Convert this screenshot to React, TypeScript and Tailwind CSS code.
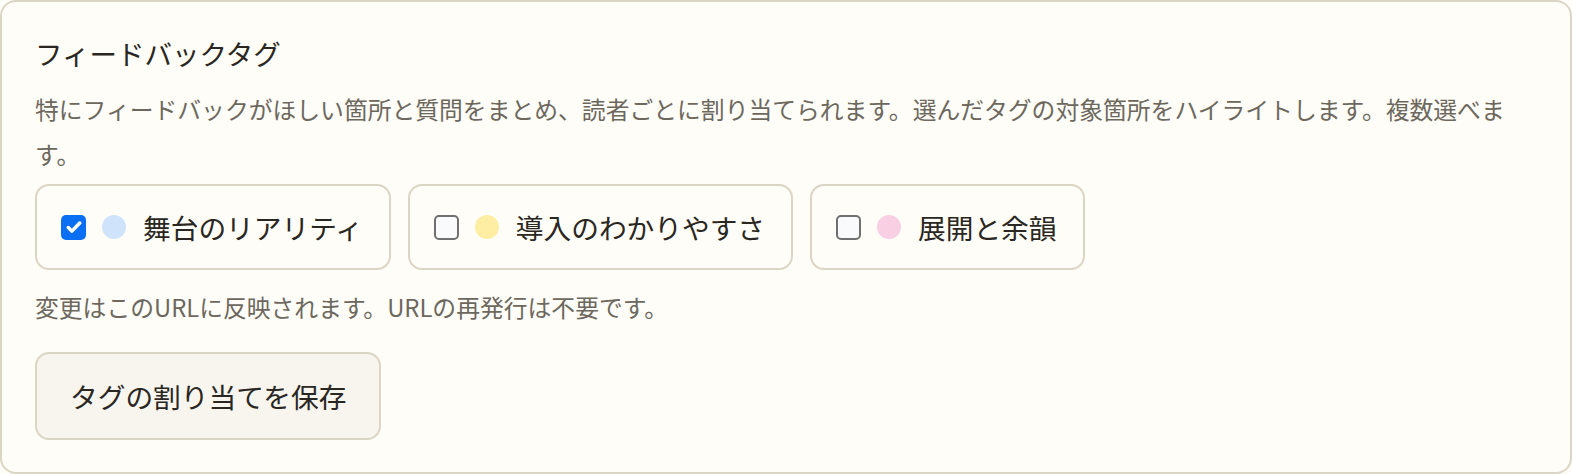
import React, { useState } from 'react';

type Tag = {
  id: string;
  label: string;
  dot: string;
};

const TAGS: Tag[] = [
  { id: 'reality', label: '舞台のリアリティ', dot: 'bg-[#cfe3fb]' },
  { id: 'intro', label: '導入のわかりやすさ', dot: 'bg-[#fdeea3]' },
  { id: 'ending', label: '展開と余韻', dot: 'bg-[#f9cfe4]' },
];

const CheckBox: React.FC<{ checked: boolean }> = ({ checked }) =>
  checked ? (
    <span className="flex h-[25px] w-[25px] shrink-0 items-center justify-center rounded-[5px] bg-[#0b6ff3]">
      <svg width="20" height="20" viewBox="0 0 16 16" fill="none">
        <path d="M3.4 8.4l2.9 2.9 6.3-6.5" stroke="#fff" strokeWidth="2.8" strokeLinecap="round" strokeLinejoin="round" />
      </svg>
    </span>
  ) : (
    <span className="h-[25px] w-[25px] shrink-0 rounded-[5px] border-2 border-[#707070] bg-[#f9fafc]" />
  );

export default function App() {
  const [selected, setSelected] = useState<string[]>(['reality']);

  const toggle = (id: string) =>
    setSelected((prev) => (prev.includes(id) ? prev.filter((x) => x !== id) : [...prev, id]));

  return (
    <div
      className="min-h-screen bg-[#fffdf7]"
      style={{ fontFamily: '"Noto Sans CJK JP", "Noto Sans", sans-serif' }}
    >
      <section className="rounded-[16px] border-2 border-[#dbd5c5] bg-[#fffdf7] px-[33px] pt-[32px] pb-[32px]">
        {/* Header */}
        <h2 className="text-[27.5px] leading-[38px] font-normal text-[#2a2722]">フィードバックタグ</h2>
        <p className="mt-[14px] text-[23.8px] leading-[45px] text-[#6d685e]">
          特にフィードバックがほしい箇所と質問をまとめ、読者ごとに割り当てられます。選んだタグの対象箇所をハイライトします。複数選べます。
        </p>

        {/* Tag chips */}
        <div className="mt-[8px] flex gap-[17px]">
          {TAGS.map((tag) => {
            const checked = selected.includes(tag.id);
            return (
              <button
                key={tag.id}
                type="button"
                onClick={() => toggle(tag.id)}
                className="flex items-center rounded-[14px] border-2 border-[#dbd5c5] bg-[#fffdf7] py-[20px] pl-[24px] pr-[26px]"
              >
                <CheckBox checked={checked} />
                <span className={`ml-[16px] h-[24px] w-[24px] shrink-0 rounded-full ${tag.dot}`} />
                <span className="ml-[17px] text-[27.7px] leading-[42px] text-[#2a2722]">{tag.label}</span>
              </button>
            );
          })}
        </div>

        {/* Footer */}
        <p className="mt-[14px] text-[23.8px] leading-[45px] text-[#6d685e]">
          変更はこのURLに反映されます。URLの再発行は不要です。
        </p>
        <button
          type="button"
          className="mt-[23px] rounded-[14px] border-2 border-[#dbd5c5] bg-[#f8f5ef] px-[33px] py-[21px] text-[27.7px] leading-[42px] text-[#2a2722]"
        >
          タグの割り当てを保存
        </button>
      </section>
    </div>
  );
}
